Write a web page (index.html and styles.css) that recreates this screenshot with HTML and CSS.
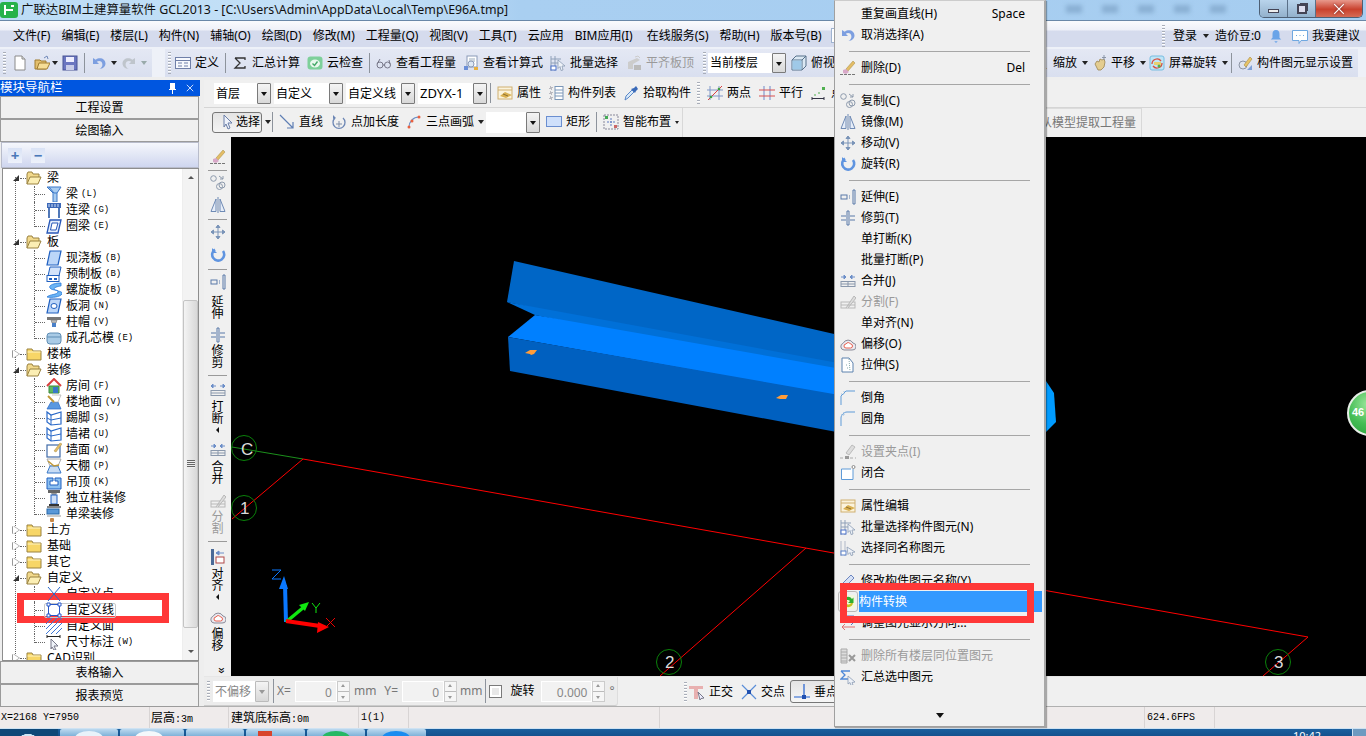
FILE: index.html
```html
<!DOCTYPE html>
<html lang="zh-CN">
<head>
<meta charset="utf-8">
<title>广联达BIM土建算量软件 GCL2013</title>
<link rel="stylesheet" href="styles.css">
</head>
<body>
<svg class="sprite" xmlns="http://www.w3.org/2000/svg">
  <symbol id="i-app" viewBox="0 0 18 16"><rect width="18" height="16" rx="3" fill="#27b24a"/><path d="M5 3v10M5 8h8M11 4h3" stroke="#fff" stroke-width="2" fill="none"/></symbol>
  <symbol id="i-new" viewBox="0 0 16 16"><path d="M3 1h7l3 3v11H3z" fill="#fff" stroke="#8a8a8a"/><path d="M10 1v3h3" fill="#ddd" stroke="#8a8a8a"/></symbol>
  <symbol id="i-open" viewBox="0 0 16 16"><path d="M1 5h5l1 1h5v8H1z" fill="#e3bf6d" stroke="#a07c30"/><path d="M3 14l2-6h11l-3 6z" fill="#f6dd96" stroke="#a07c30"/><path d="M10 3l3-2 1 3" stroke="#7088b8" fill="none"/></symbol>
  <symbol id="i-save" viewBox="0 0 16 16"><rect x="1" y="1" width="14" height="14" fill="#6b76c0" stroke="#4a5496"/><rect x="4" y="2" width="8" height="5" fill="#eef"/><rect x="4" y="10" width="8" height="5" fill="#c8cce8"/></symbol>
  <symbol id="i-undo" viewBox="0 0 16 16"><path d="M2 3v6h6L5.8 6.8C8 5.2 11.4 6.2 11.4 9.4c0 2-1 3.400-3 4.600 3.600-.2 6.100-2.400 6.100-5.400 0-4.800-5.800-7-9.800-3.800z" fill="#7d9fe0"/></symbol>
  <symbol id="i-redo" viewBox="0 0 16 16"><path d="M14 3v6H8l2.200-2.200C8 5.200 4.600 6.200 4.600 9.400c0 2 1 3.400 3 4.600-3.600-.2-6.100-2.400-6.100-5.400 0-4.800 5.800-7 9.800-3.800z" fill="#bfc5cc"/></symbol>
  <symbol id="i-define" viewBox="0 0 16 16"><rect x=".5" y="2.500" width="15" height="11" fill="#f6f8fd" stroke="#6f7fa8"/><path d="M1 5.500h14M3 8h4M3 11h4M9 8h4M9 11h4" stroke="#6f7fa8" fill="none"/></symbol>
  <symbol id="i-sigma" viewBox="0 0 16 16"><path d="M3 3h10v2M3 3l5 5-5 5h10v-2" fill="none" stroke="#333" stroke-width="1.300"/></symbol>
  <symbol id="i-check" viewBox="0 0 16 16"><rect x=".5" y="1.500" width="15" height="13" rx="3" fill="#7ed09a"/><ellipse cx="8" cy="8.500" rx="5" ry="4" fill="#eaf8ee"/><path d="M5.500 8.500l2 2 3-4" fill="none" stroke="#44a868" stroke-width="1.400"/></symbol>
  <symbol id="i-glass" viewBox="0 0 16 16"><circle cx="4" cy="10" r="3" fill="none" stroke="#778"/><circle cx="11.500" cy="10" r="3" fill="none" stroke="#778"/><path d="M7 10h2M1 9l3-5M14 9l-1-4" stroke="#778" fill="none"/></symbol>
  <symbol id="i-calc" viewBox="0 0 16 16"><rect x="4" y="1" width="10" height="11" fill="#fff" stroke="#8a9ab8"/><path d="M6 4h6M6 6h6M6 8h3" stroke="#9ab"/><circle cx="8" cy="9" r="3" fill="#dde8f6" stroke="#8a9ab8"/><rect x="1" y="11" width="4" height="4" fill="#6b8fd8"/><rect x="11" y="12" width="4" height="3" fill="#e8b040"/></symbol>
  <symbol id="i-batch" viewBox="0 0 16 16"><path d="M1 1v15M5 1v15M1 4h10M1 8h8" stroke="#8fa0b8" fill="none"/><rect x="1" y="11" width="5" height="4" fill="#fff" stroke="#4a70c8"/><path d="M8 5l7 6h-3l1 4-2 .5-1-4-2 2z" fill="#eef2f8" stroke="#8c9cb4" stroke-width=".8"/></symbol>
  <symbol id="i-flat" viewBox="0 0 16 16"><path d="M2 7l9-4 3 2-7 4v5H2z" fill="#ccc"/><path d="M8 15h7v-5H8z" fill="#bbb"/><path d="M9 2l3-1 2 2" stroke="#ccc" fill="none"/></symbol>
  <symbol id="i-cube" viewBox="0 0 16 16"><path d="M1 5l4-4h10v10l-4 4H1z" fill="#dbe8f3" stroke="#56708a"/><path d="M1 5h10v10M11 5l4-4" fill="none" stroke="#56708a"/><rect x="1.500" y="5.500" width="9" height="9" fill="#9fc9e8"/></symbol>
  <symbol id="i-zoom" viewBox="0 0 16 16"><path d="M5 3h4l2-2v5L9 8l5 6h-3L7 9l-4 5H1l4-6z" fill="#d4a860"/></symbol>
  <symbol id="i-pan" viewBox="0 0 16 16"><path d="M3 9l2-3 2 1 1-3 2 1 2-1 1 3-1 5-3 3H6z" fill="#e4cd90" stroke="#9a8450" stroke-width=".8"/><path d="M12 0v5M10 2.500h4" stroke="#8a96a8"/></symbol>
  <symbol id="i-screen" viewBox="0 0 16 16"><rect x="1" y="1" width="14" height="14" rx="2" fill="#bfe4f6" stroke="#78bde0"/><path d="M3 9a5 5 0 0 1 9-3" stroke="#d85040" fill="none" stroke-width="1.300"/><path d="M13 8a5 5 0 0 1-9 3" stroke="#d85040" fill="none" stroke-width="1.300"/><rect x="5" y="7" width="7" height="3" fill="#e8d070"/><circle cx="10" cy="11" r="1.500" fill="#50b050"/></symbol>
  <symbol id="i-show" viewBox="0 0 16 16"><circle cx="6" cy="10" r="4" fill="#dfe4ee" stroke="#8c94a4"/><path d="M7 10L13 2l2 2-6 8z" fill="#e8c468" stroke="#a88c40" stroke-width=".6"/><path d="M10 15l5-5v5z" fill="#7ea0d8"/></symbol>
  <symbol id="i-prop" viewBox="0 0 16 16"><rect x="1" y="2" width="14" height="12" fill="#fbf3dc" stroke="#d0b070"/><path d="M1 5h14" stroke="#d0b070"/><path d="M3 11l5-4 7 3-6 3z" fill="#d9b050"/><path d="M6 9l5 2" stroke="#8f7030"/></symbol>
  <symbol id="i-list" viewBox="0 0 16 16"><path d="M2 2h2v2H2zM2 7h2v2H2zM2 12h2v2H2z" fill="none" stroke="#667" stroke-width=".8" stroke-dasharray="1 1"/><rect x="7" y="1.500" width="8" height="13" fill="#fff" stroke="#7a96b8"/><path d="M7 5h8M7 8h8M7 11h8" stroke="#7a96b8"/></symbol>
  <symbol id="i-pick" viewBox="0 0 16 16"><path d="M2 15l1-4 6-6 2 2-6 6z" fill="#d8e8f8" stroke="#5a88c8"/><path d="M8 4l4 4 1-2 2-2-2-3-2 2z" fill="#3a6ab8"/></symbol>
  <symbol id="i-twop" viewBox="0 0 16 16"><path d="M3 1v14M12 1v14M0 5h16M0 11h16" stroke="#8098c8" fill="none"/><path d="M1 15L15 1" stroke="#d84040"/><circle cx="4" cy="12" r="1.300" fill="#40a040"/><circle cx="12" cy="4" r="1.300" fill="#40a040"/></symbol>
  <symbol id="i-par" viewBox="0 0 16 16"><path d="M5 1v14M11 1v14" stroke="#7088c8" fill="none"/><path d="M0 5h16M0 11h16" stroke="#d85050" fill="none"/></symbol>
  <symbol id="i-pdist" viewBox="0 0 16 16"><path d="M1 12v3M1 13.500h12M13 12v3" stroke="#334" fill="none"/><rect x="11" y="2" width="3" height="3" fill="#50b050"/><path d="M3 10h2M7 8h2" stroke="#50b050"/></symbol>
  <symbol id="i-cur" viewBox="0 0 16 16"><path d="M5 1l8 8H9l2 5-2 1-2-5-2 3z" fill="#eef2fa" stroke="#6a7ea8"/></symbol>
  <symbol id="i-line" viewBox="0 0 16 16"><path d="M1 1l13 13M14 8v6H8" fill="none" stroke="#5f7eb4" stroke-width="1.200"/></symbol>
  <symbol id="i-plen" viewBox="0 0 16 16"><path d="M4 4a6 6 0 1 0 8 0" fill="none" stroke="#6c86b4" stroke-width="1.300"/><path d="M8 7v6M5 10h6" stroke="#7f8ea8"/><path d="M2 1l3 3-3 1z" fill="#6c86b4"/></symbol>
  <symbol id="i-arc" viewBox="0 0 16 16"><path d="M3 13C3 8 7 3 13 3" fill="none" stroke="#6a90c8" stroke-width="1.200"/><circle cx="3" cy="13" r="1.500" fill="#e86040"/><circle cx="6" cy="7" r="1.500" fill="#e86040"/><circle cx="13" cy="3" r="1.500" fill="#e86040"/></symbol>
  <symbol id="i-rect" viewBox="0 0 16 16"><rect x=".5" y="2.500" width="15" height="10" fill="#cfe0fb" stroke="#6a8ed0"/></symbol>
  <symbol id="i-smart" viewBox="0 0 16 16"><rect x="1" y="1" width="14" height="14" fill="none" stroke="#889" stroke-dasharray="2 1"/><path d="M8 4v8M4 8h8" stroke="#5a78c0" stroke-dasharray="2 1"/><rect x="2" y="2" width="3" height="3" fill="#4a5"/><rect x="11" y="11" width="3" height="3" fill="#c66"/></symbol>
  <symbol id="i-ortho" viewBox="0 0 16 16"><path d="M0 2h14v3H9v10H5V5H0z" fill="#e8b0b0"/><path d="M9 8l6 6-3 .5-1 1.500z" fill="#eef" stroke="#778"/></symbol>
  <symbol id="i-cross" viewBox="0 0 16 16"><path d="M1 1l14 14M15 1L1 15" stroke="#5a8ed8" stroke-width="1.200"/><rect x="6" y="6" width="4" height="4" fill="#2050b0"/></symbol>
  <symbol id="i-perp" viewBox="0 0 16 16"><path d="M10 0v13M0 13h16" stroke="#2060d0" stroke-width="1.200"/><rect x="8" y="11" width="4" height="4" fill="#2050b0"/></symbol>
  <symbol id="i-bell" viewBox="0 0 16 16"><path d="M8 1c3 0 4 2 4 5v4l2 2H2l2-2V6c0-3 1-5 4-5z" fill="#6aa4e8"/><path d="M6 14h4l-2 2z" fill="#6aa4e8"/></symbol>
  <symbol id="i-chat" viewBox="0 0 16 16"><path d="M.5 2.500h15v10H9l-2 3v-3H.5z" fill="#fff" stroke="#70a8e0"/><path d="M4 7.500h1M7.500 7.500h1M11 7.500h1" stroke="#70a8e0"/></symbol>
  <symbol id="i-pin" viewBox="0 0 10 12"><path d="M3 1h5v6h1v1H6v4H5V8H2V7h1z" fill="#fff"/></symbol>
  <symbol id="i-close" viewBox="0 0 10 10"><path d="M1 1l8 8M9 1L1 9" stroke="#fff" fill="none"/></symbol>

  <symbol id="m-del" viewBox="0 0 16 16"><path d="M0 14.500h15" stroke="#777" stroke-dasharray="3 1"/><path d="M6 9l7-8 2 2-7 8z" fill="#e4bd66" stroke="#a08840" stroke-width=".5"/><path d="M3 10l3-1 3 3-3 2-3-1z" fill="#d8a8c8"/></symbol>
  <symbol id="m-copy" viewBox="0 0 16 16"><circle cx="3.500" cy="3.500" r="2.800" fill="none" stroke="#8d9aac"/><circle cx="9.500" cy="11.500" r="3" fill="none" stroke="#8d9aac"/><circle cx="12" cy="10" r="3" fill="none" stroke="#8d9aac"/><path d="M9 1l4 3m0-3v3h-3" stroke="#8d9aac" fill="none"/></symbol>
  <symbol id="m-mirror" viewBox="0 0 16 16"><path d="M6 2L1 14.500h5zM10 2l5 12.500h-5z" fill="#e6edf8" stroke="#6e8ab4"/><path d="M8 0v16" stroke="#6e8ab4"/></symbol>
  <symbol id="m-move" viewBox="0 0 16 16"><path d="M8 1v14M1 8h14M8 1L6 3.500h4zM8 15l-2-2.500h4zM1 8l2.500-2v4zM15 8l-2.500-2v4z" fill="#7a94b8" stroke="#7a94b8"/></symbol>
  <symbol id="m-rot" viewBox="0 0 16 16"><path d="M5 2.500A6 6 0 1 0 13 4" fill="none" stroke="#5f94e0" stroke-width="2.600"/><path d="M2 1v5h5z" fill="#5f94e0"/></symbol>
  <symbol id="m-ext" viewBox="0 0 16 16"><rect x="1" y="6" width="6" height="4" fill="none" stroke="#5878a8"/><path d="M9 7h2M9 9h2" stroke="#5878a8" stroke-dasharray="1 1"/><path d="M13 1h2v14h-2z" fill="none" stroke="#5878a8"/></symbol>
  <symbol id="m-trim" viewBox="0 0 16 16"><path d="M1 6h5M1 10h5M10 6h5M10 10h5" stroke="#5878a8" fill="none"/><path d="M7 1h2v14H7z" fill="none" stroke="#5878a8"/></symbol>
  <symbol id="m-merge" viewBox="0 0 16 16"><path d="M1 4h5M15 4h-5M6 4L4 2v4zM10 4l2-2v4z" stroke="#6c8ec8" fill="#6c8ec8"/><rect x="1" y="8.500" width="14" height="5" fill="none" stroke="#8a98ac"/><path d="M8 8v6M1 11h14" stroke="#8a98ac"/></symbol>
  <symbol id="m-break" viewBox="0 0 16 16"><path d="M6 4H1M10 4h5M1 4l2-2v4zM15 4l-2-2v4z" stroke="#6c8ec8" fill="#6c8ec8"/><rect x="1" y="8.500" width="14" height="5" fill="none" stroke="#8a98ac"/><path d="M1 11h14" stroke="#8a98ac"/></symbol>
  <symbol id="m-align" viewBox="0 0 16 16"><rect x="1" y="0" width="3" height="16" fill="#4a6a98"/><path d="M14 4H6M6 4l3-2v4z" stroke="#6c8ec8" fill="#6c8ec8"/><rect x="6" y="8" width="8" height="6" fill="#fff" stroke="#b04848"/></symbol>
  <symbol id="m-split" viewBox="0 0 16 16"><rect x="1" y="8" width="14" height="6" fill="none" stroke="#b8b8b8"/><path d="M1 11h14M6 14L14 2l2 2-8 10" stroke="#b8b8b8" fill="#ddd"/></symbol>
  <symbol id="m-off" viewBox="0 0 16 16"><path d="M4 14a3.500 3.500 0 0 1-.8-6.800A5.500 5.500 0 0 1 13 7a3.500 3.500 0 0 1-1 7z" fill="#eaeaf0" stroke="#8a8a98"/><path d="M6 12a2 2 0 0 1 0-4 2.500 2.500 0 0 1 4.500 0 2 2 0 0 1 0 4z" fill="#fff" stroke="#e86050"/></symbol>
  <symbol id="m-str" viewBox="0 0 16 16"><path d="M2 1h7l4 5v9H2z" fill="#fff" stroke="#5d82ae"/><path d="M9 2l1 12M6 8h1M7 11h1" stroke="#8aa" stroke-dasharray="1 1"/></symbol>
  <symbol id="m-chamf" viewBox="0 0 16 16"><path d="M1 15V6L6 1h9" fill="none" stroke="#5f9bd8"/><path d="M1 4h3M4 1v3" stroke="#9dc0e0" stroke-dasharray="1 1"/></symbol>
  <symbol id="m-fillet" viewBox="0 0 16 16"><path d="M1 15V7C1 4 4 1 7 1h8" fill="none" stroke="#5f9bd8"/><path d="M1 4h3M4 1v3" stroke="#9dc0e0" stroke-dasharray="1 1"/></symbol>
  <symbol id="m-grip" viewBox="0 0 16 16"><path d="M0 14h16" stroke="#aaa" stroke-dasharray="3 2"/><path d="M6 9l6-8 3 2-6 8z" fill="#ddd" stroke="#bbb"/><rect x="5" y="12" width="4" height="3" fill="#999"/></symbol>
  <symbol id="m-closed" viewBox="0 0 16 16"><path d="M13 4v10.500H1.500V4H11" fill="#fff" stroke="#5f9bd8"/><circle cx="13.500" cy="2" r="1.500" fill="#fff" stroke="#888"/></symbol>
  <symbol id="m-same" viewBox="0 0 16 16"><path d="M1 1v15M5 1v15" stroke="#b0b8c8" fill="none"/><rect x="1" y="11" width="5" height="4" fill="#fff" stroke="#5a80c8"/><path d="M7 7l8 5-3 .5 1 2.500-2 .5-1-3-2 2z" fill="#eef2f8" stroke="#8c9cb4" stroke-width=".8"/></symbol>
  <symbol id="m-name" viewBox="0 0 16 16"><path d="M1 14l2-4 8-8 3 3-8 8z" fill="#d7e1f5" stroke="#6c86c0"/><path d="M1 15h14" stroke="#9ab"/></symbol>
  <symbol id="m-conv" viewBox="0 0 16 16"><rect x="1" y="1" width="14" height="14" rx="2" fill="#f2f8dc"/><path d="M3 7a5 5 0 0 1 9-2l1.500-1.500V9H8l2-2a3 3 0 0 0-5 1z" fill="#2fae2f"/><path d="M13 9a5 5 0 0 1-9 2l-1.500 1.500V7.500H8l-2 2a3 3 0 0 0 5-.5z" fill="#c8c020"/></symbol>
  <symbol id="m-dir" viewBox="0 0 16 16"><path d="M6 1h8v5H6z" fill="none" stroke="#5878c8"/><path d="M1 7h13M11 4l3 3-3 3" fill="none" stroke="#5878c8"/><path d="M15 12H2M5 9l-3 3 3 3" fill="none" stroke="#e07070"/></symbol>
  <symbol id="m-delall" viewBox="0 0 16 16"><path d="M1 1h6v14H1z" fill="#ddd" stroke="#aaa"/><path d="M1 4h6M1 7h6M1 10h6M1 13h6" stroke="#aaa"/><path d="M9 7l6 6M15 7l-6 6" stroke="#999" stroke-width="2"/></symbol>
  <symbol id="m-sum" viewBox="0 0 16 16"><path d="M1 2h9M1 2l4 4-4 4h8" fill="none" stroke="#4e88d8" stroke-width="1.300"/><path d="M8 7l7 6-3 .5 1 2.500-2 .5-1-3-2 1.500z" fill="#eef2f8" stroke="#8c9cb4" stroke-width=".8"/></symbol>

  <symbol id="f-open" viewBox="0 0 16 14"><path d="M1 13V3l1-2h4l1 2h6v3" fill="#f2d98c" stroke="#9a8240"/><path d="M1 13l3-7h11l-3 7z" fill="#fbeeb4" stroke="#9a8240"/></symbol>
  <symbol id="f-closed" viewBox="0 0 16 14"><path d="M1 13V2h5l1 2h8v9z" fill="#f7d667" stroke="#9a8240"/><path d="M1.500 5h13" stroke="#fff4c4"/></symbol>
  <symbol id="t-beam" viewBox="0 0 16 16"><path d="M1 1h14L11 7v9H7V7z" fill="#a8ccf0" stroke="#3c78c8"/><path d="M3 1l5 6h3" stroke="#3c78c8" fill="none"/></symbol>
  <symbol id="t-lbeam" viewBox="0 0 16 16"><rect x="1" y="1" width="14" height="5" fill="#3c68b8"/><path d="M3 2v3M6 2v3M9 2v3M12 2v3" stroke="#cfe0f8"/><path d="M3 6v10M13 6v10" stroke="#5078b8" stroke-width="2"/></symbol>
  <symbol id="t-ring" viewBox="0 0 16 16"><path d="M4 2h11l-3 13H1z" fill="#e4eefc" stroke="#2858b8" stroke-width="1.300"/><path d="M6 5h6l-2 7H4.500z" fill="#fff" stroke="#2858b8"/></symbol>
  <symbol id="t-slab" viewBox="0 0 16 16"><path d="M4 1h11l-3 14H1z" fill="#bcd6f8" stroke="#2060c0" stroke-width="1.200"/></symbol>
  <symbol id="t-pre" viewBox="0 0 16 16"><path d="M4 1h11l-2 9H2z" fill="#d3e3fa" stroke="#2060c0"/><rect x="1" y="9.500" width="12" height="6" fill="#fff" stroke="#2060c0"/><path d="M3 12h3v2H3zM8 12h3v2H8z" fill="#2060c0"/></symbol>
  <symbol id="t-spiral" viewBox="0 0 16 16"><path d="M15 1C9 1 2 3 4 6s9 1 8 4-8 2-11 5c5 1 13 0 15-3s-8-3-8-5 6-3 7-3z" fill="#6bb4f4" stroke="#2878d8" stroke-width=".8"/></symbol>
  <symbol id="t-hole" viewBox="0 0 16 16"><path d="M4 1h11l-3 14H1z" fill="#bcd6f8" stroke="#2060c0" stroke-width="1.200"/><ellipse cx="8" cy="8" rx="3" ry="2.500" fill="#fff" stroke="#2060c0"/></symbol>
  <symbol id="t-cap" viewBox="0 0 16 16"><rect x="1" y="3" width="14" height="3" fill="#777"/><path d="M5 6h6l-1 3H6z" fill="#bbb" stroke="#777" stroke-width=".6"/><path d="M6 9h4v4H6z" fill="#4a80c8"/></symbol>
  <symbol id="t-core" viewBox="0 0 16 16"><rect x="1" y="3" width="14" height="11" rx="3" fill="#a9cbe6" stroke="#5f8db4"/><path d="M1 7h14" stroke="#5f8db4"/></symbol>
  <symbol id="t-room" viewBox="0 0 16 16"><path d="M1 8l7-7 7 7" fill="none" stroke="#d84040" stroke-width="2"/><path d="M3 8h10v7H3z" fill="#60b860" stroke="#3a8a3a"/><rect x="7" y="9" width="5" height="6" fill="#3878c8"/></symbol>
  <symbol id="t-floor" viewBox="0 0 16 16"><path d="M5 8L1 15h14l-3-7z" fill="#5a98e0" stroke="#2868c8" stroke-width=".7"/><path d="M6 1h9l-3 7H6" fill="#fff" stroke="#aaa" stroke-width=".7"/><path d="M2 2l6 6" stroke="#c09838" stroke-width="2"/></symbol>
  <symbol id="t-skirt" viewBox="0 0 16 16"><path d="M1 2l4 3 10-3v12l-10 1-4-3z" fill="#fff" stroke="#2868c8" stroke-width="1.200"/><path d="M5 5v10M1 8l4 2 10-2" stroke="#2868c8" fill="none"/></symbol>
  <symbol id="t-wall" viewBox="0 0 16 16"><rect x="1" y="3" width="13" height="12" fill="#fff" stroke="#3f6aa8" stroke-width="1.200"/><path d="M8 9l6-8 2 1-6 8z" fill="#e4bd66" stroke="#a88c40" stroke-width=".5"/></symbol>
  <symbol id="t-ceil" viewBox="0 0 16 16"><path d="M1 1h14l-3 7H4z" fill="#fff" stroke="#aaa"/><path d="M4 8h8l3 7H1z" fill="#c8dcf4" stroke="#3878c8"/><path d="M2 3l6 5 5-1" stroke="#c09838" stroke-width="1.500" fill="none"/></symbol>
  <symbol id="t-susp" viewBox="0 0 16 16"><path d="M1 4h6v3H4v4h8V7H9V4h6v11H1z" fill="#8cc0f0" stroke="#2060c0"/></symbol>
  <symbol id="t-col" viewBox="0 0 16 16"><rect x="2" y="0" width="12" height="3" fill="#666"/><path d="M5 3h6l-1 2H6z" fill="#999"/><rect x="5" y="5" width="6" height="9" fill="#cfe0f8" stroke="#2060c0"/><rect x="3" y="14" width="10" height="2" fill="#333"/></symbol>
  <symbol id="t-bfin" viewBox="0 0 16 16"><rect x="1" y="0" width="14" height="2" fill="#888"/><rect x="1" y="3" width="12" height="5" fill="#5a98d8" stroke="#2868a8"/><rect x="1" y="9" width="14" height="2" fill="#ccc"/><rect x="4" y="12" width="4" height="4" rx="1" fill="#c88848"/></symbol>
  <symbol id="t-point" viewBox="0 0 16 16"><path d="M2 1l12 14M14 1L2 15" stroke="#2868c8"/></symbol>
  <symbol id="t-cline" viewBox="0 0 16 16"><path d="M2.500 2.500h11v11h-11z" fill="none" stroke="#2858c8"/><path d="M1 1h3v3H1zM12 1h3v3h-3zM1 12h3v3H1zM12 12h3v3h-3z" fill="#fff" stroke="#2858c8"/></symbol>
  <symbol id="t-carea" viewBox="0 0 16 16"><path d="M0 6l6-6M0 11L11 0M0 16L16 0M5 16L16 5M10 16l6-6" stroke="#3c78d8"/></symbol>
  <symbol id="t-dim" viewBox="0 0 16 16"><path d="M1 1v3M14 1v3M1 2.500h13" stroke="#222" fill="none"/><path d="M5 5l7 7H8l2 4h-2l-2-3-1 2z" fill="#eef2f8" stroke="#778"/></symbol>
</svg>

<div class="app">
  <header class="titlebar">
    <svg class="app-logo"><use href="#i-app"/></svg>
    <span class="title-text">广联达BIM土建算量软件 GCL2013 - [C:\Users\Admin\AppData\Local\Temp\E96A.tmp]</span>
    <div class="blurred"><i></i><i></i><i></i><i></i><i></i></div>
    <div class="winctl">
      <span class="win min"><b></b></span>
      <span class="win max"><b></b></span>
      <span class="win cls"><svg><use href="#i-close"/></svg></span>
    </div>
  </header>

  <nav class="menubar">
    <span>文件(F)</span><span>编辑(E)</span><span>楼层(L)</span><span>构件(N)</span><span>辅轴(O)</span><span>绘图(D)</span><span>修改(M)</span><span>工程量(Q)</span><span>视图(V)</span><span>工具(T)</span><span>云应用</span><span>BIM应用(I)</span><span class="ml3">在线服务(S)</span><span>帮助(H)</span><span>版本号(B)</span>
    <span class="searchbox"></span>
    <div class="menu-right">
      <i class="grip"></i>
      <span class="mlogin">登录</span><i class="caret"></i><span>造价豆:0</span>
      <svg class="ic bell"><use href="#i-bell"/></svg>
      <span class="tool"><svg class="ic"><use href="#i-chat"/></svg>我要建议</span>
    </div>
  </nav>

  <div class="maintools">
    <div class="tgroup g-file">
      <i class="grip"></i>
      <svg class="ic ml6"><use href="#i-new"/></svg>
      <svg class="ic ml6"><use href="#i-open"/></svg><i class="caret ml2"></i>
      <svg class="ic ml4"><use href="#i-save"/></svg>
      <i class="sep ml6"></i>
      <svg class="ic ml6"><use href="#i-undo"/></svg><i class="caret ml4"></i>
      <svg class="ic ml4"><use href="#i-redo"/></svg><i class="caret ml4 off"></i>
    </div>
    <div class="tgroup g-main">
      <i class="grip"></i>
      <span class="tool ml4"><svg class="ic"><use href="#i-define"/></svg>定义</span>
      <i class="sep ml6"></i>
      <span class="tool ml6"><svg class="ic"><use href="#i-sigma"/></svg>汇总计算</span>
      <span class="tool ml7"><svg class="ic"><use href="#i-check"/></svg>云检查</span>
      <i class="sep ml6"></i>
      <span class="tool ml6"><svg class="ic"><use href="#i-glass"/></svg>查看工程量</span>
      <span class="tool ml7"><svg class="ic"><use href="#i-calc"/></svg>查看计算式</span>
      <span class="tool ml7"><svg class="ic"><use href="#i-batch"/></svg>批量选择</span>
      <span class="tool ml8 dis"><svg class="ic"><use href="#i-flat"/></svg>平齐板顶</span>
    </div>
    <div class="tgroup g-view">
      <i class="grip"></i>
      <span class="sel w64 ml2">当前楼层</span><i class="dd"></i>
      <span class="tool ml5"><svg class="ic"><use href="#i-cube"/></svg>俯视</span>
      <span class="under-menu"></span>
      <span class="tool"><svg class="ic"><use href="#i-zoom"/></svg>缩放</span><i class="caret ml5"></i>
      <span class="tool ml4 t3"><svg class="ic"><use href="#i-pan"/></svg>平移</span><i class="caret ml5"></i>
      <span class="tool ml3"><svg class="ic"><use href="#i-screen"/></svg>屏幕旋转</span><i class="caret ml5"></i>
      <i class="sep ml3"></i>
      <span class="tool ml5"><svg class="ic"><use href="#i-show"/></svg>构件图元显示设置</span>
    </div>
  </div>

  <div class="main">
    <aside class="nav">
      <div class="nav-head"><span>模块导航栏</span><svg class="pin"><use href="#i-pin"/></svg><svg class="x"><use href="#i-close"/></svg></div>
      <button class="nav-btn">工程设置</button>
      <button class="nav-btn">绘图输入</button>
      <div class="tree-tools"><span class="pm">+</span><span class="pm">−</span></div>
      <div class="tree-wrap">
        <ul class="tree">
          <li class="p open"><svg class="fold"><use href="#f-open"/></svg>梁</li>
          <li class="c"><svg class="ic"><use href="#t-beam"/></svg>梁<em>(L)</em></li>
          <li class="c"><svg class="ic"><use href="#t-lbeam"/></svg>连梁<em>(G)</em></li>
          <li class="c last"><svg class="ic"><use href="#t-ring"/></svg>圈梁<em>(E)</em></li>
          <li class="p open"><svg class="fold"><use href="#f-open"/></svg>板</li>
          <li class="c"><svg class="ic"><use href="#t-slab"/></svg>现浇板<em>(B)</em></li>
          <li class="c"><svg class="ic"><use href="#t-pre"/></svg>预制板<em>(B)</em></li>
          <li class="c"><svg class="ic"><use href="#t-spiral"/></svg>螺旋板<em>(B)</em></li>
          <li class="c"><svg class="ic"><use href="#t-hole"/></svg>板洞<em>(N)</em></li>
          <li class="c"><svg class="ic"><use href="#t-cap"/></svg>柱帽<em>(V)</em></li>
          <li class="c last"><svg class="ic"><use href="#t-core"/></svg>成孔芯模<em>(E)</em></li>
          <li class="p"><svg class="fold"><use href="#f-closed"/></svg>楼梯</li>
          <li class="p open"><svg class="fold"><use href="#f-open"/></svg>装修</li>
          <li class="c"><svg class="ic"><use href="#t-room"/></svg>房间<em>(F)</em></li>
          <li class="c"><svg class="ic"><use href="#t-floor"/></svg>楼地面<em>(V)</em></li>
          <li class="c"><svg class="ic"><use href="#t-skirt"/></svg>踢脚<em>(S)</em></li>
          <li class="c"><svg class="ic"><use href="#t-skirt"/></svg>墙裙<em>(U)</em></li>
          <li class="c"><svg class="ic"><use href="#t-wall"/></svg>墙面<em>(W)</em></li>
          <li class="c"><svg class="ic"><use href="#t-ceil"/></svg>天棚<em>(P)</em></li>
          <li class="c"><svg class="ic"><use href="#t-susp"/></svg>吊顶<em>(K)</em></li>
          <li class="c"><svg class="ic"><use href="#t-col"/></svg>独立柱装修</li>
          <li class="c last"><svg class="ic"><use href="#t-bfin"/></svg>单梁装修</li>
          <li class="p"><svg class="fold"><use href="#f-closed"/></svg>土方</li>
          <li class="p"><svg class="fold"><use href="#f-closed"/></svg>基础</li>
          <li class="p"><svg class="fold"><use href="#f-closed"/></svg>其它</li>
          <li class="p open"><svg class="fold"><use href="#f-open"/></svg>自定义</li>
          <li class="c"><svg class="ic"><use href="#t-point"/></svg>自定义点</li>
          <li class="c"><span class="frame"><svg class="ic"><use href="#t-cline"/></svg>自定义线</span></li>
          <li class="c"><svg class="ic"><use href="#t-carea"/></svg>自定义面</li>
          <li class="c last"><svg class="ic"><use href="#t-dim"/></svg>尺寸标注<em>(W)</em></li>
          <li class="p"><svg class="fold"><use href="#f-closed"/></svg>CAD识别</li>
        </ul>
        <div class="vscroll">
          <span class="sb-up"></span>
          <span class="sb-track"><span class="sb-thumb"><i></i></span></span>
          <span class="sb-down"></span>
        </div>
      </div>
      <button class="nav-btn">表格输入</button>
      <button class="nav-btn">报表预览</button>
      <span class="redbox redbox-tree"></span>
    </aside>

    <section class="work">
      <div class="rowa">
        <span class="sel w44">首层</span><i class="dd"></i>
        <span class="sel w55 ml3">自定义</span><i class="dd"></i>
        <span class="sel w55 ml3">自定义线</span><i class="dd"></i>
        <span class="sel w55 ml3 latin">ZDYX-1</span><i class="dd"></i>
        <i class="sep ml3"></i>
        <span class="tool ml6"><svg class="ic"><use href="#i-prop"/></svg>属性</span>
        <span class="tool ml7"><svg class="ic"><use href="#i-list"/></svg>构件列表</span>
        <span class="tool ml7"><svg class="ic"><use href="#i-pick"/></svg>拾取构件</span>
        <i class="grip ml6"></i>
        <span class="tool ml7"><svg class="ic"><use href="#i-twop"/></svg>两点</span>
        <span class="tool ml8"><svg class="ic"><use href="#i-par"/></svg>平行</span>
        <span class="tool ml8"><svg class="ic"><use href="#i-pdist"/></svg>点角</span>
      </div>
      <div class="rowb">
        <span class="tgl-select tool"><svg class="ic"><use href="#i-cur"/></svg>选择</span><i class="caret ml3"></i>
        <i class="sep ml1"></i>
        <span class="tool ml6"><svg class="ic"><use href="#i-line"/></svg>直线</span>
        <span class="tool ml8"><svg class="ic"><use href="#i-plen"/></svg>点加长度</span>
        <span class="tool ml7"><svg class="ic"><use href="#i-arc"/></svg>三点画弧</span><i class="caret ml4"></i>
        <span class="sel w40 ml2"></span><i class="dd"></i>
        <span class="tool ml6"><svg class="ic"><use href="#i-rect"/></svg>矩形</span>
        <i class="sep ml6"></i>
        <span class="tool ml6"><svg class="ic"><use href="#i-smart"/></svg>智能布置</span><i class="caret small ml4"></i>
        <span class="rowb-end"></span>
        <span class="ghost">从模型提取工程量</span>
      </div>
      <div class="stage">
        <div class="vbar">
          <svg class="ic mt12"><use href="#m-del"/></svg>
          <i class="hsep mt5"></i>
          <svg class="ic mt4"><use href="#m-copy"/></svg>
          <svg class="ic mt6"><use href="#m-mirror"/></svg>
          <i class="hsep mt6"></i>
          <svg class="ic mt4"><use href="#m-move"/></svg>
          <svg class="ic mt7"><use href="#m-rot"/></svg>
          <i class="hsep mt6"></i>
          <svg class="ic mt4"><use href="#m-ext"/></svg>
          <span class="vtext mt6">延伸</span>
          <svg class="ic mt7"><use href="#m-trim"/></svg>
          <span class="vtext mt2">修剪</span>
          <i class="hsep mt6"></i>
          <svg class="ic mt6"><use href="#m-break"/></svg>
          <span class="vtext mt3">打断</span>
          <i class="left-tri mt2"></i>
          <svg class="ic mt9"><use href="#m-merge"/></svg>
          <span class="vtext mt3">合并</span>
          <svg class="ic mt8"><use href="#m-split"/></svg>
          <span class="vtext mt2 dis">分割</span>
          <i class="hsep mt6"></i>
          <svg class="ic mt7"><use href="#m-align"/></svg>
          <span class="vtext mt3">对齐</span>
          <i class="left-tri mt2"></i>
          <svg class="ic mt9"><use href="#m-off"/></svg>
          <span class="vtext mt3">偏移</span>
          <span class="chev mt13">»</span>
        </div>
        <div class="canvas">
          <svg class="scene" viewBox="231 137 1135 539" xmlns="http://www.w3.org/2000/svg">
            <defs>
              <radialGradient id="ball" cx="45%" cy="30%" r="75%"><stop offset="0" stop-color="#9be69b"/><stop offset=".6" stop-color="#45bd55"/><stop offset="1" stop-color="#2ea640"/></radialGradient>
            </defs>
            <polygon points="514,261 1040,381 1040,420 507,302" fill="#0066c6"/>
            <polygon points="507,302 1040,400 1040,420 535,315" fill="#0070d8"/>
            <polygon points="508,337 535,315 1040,404 1040,432" fill="#0080ff"/>
            <polygon points="508,337 1040,430 1040,470 510,371" fill="#0060c0"/>
            <polygon points="1040,378 1046,381 1054,393 1056,422 1046,432 1040,432" fill="#009bff"/>
            <path d="M525 353l5-3h7l-3 4-3 1-1-1z" fill="#ff9d3a"/>
            <path d="M776 398l5-3h7l-2 4h-6z" fill="#ff9d3a"/>
            <g fill="none" stroke-width="1">
              <path d="M232 447L303 459" stroke="#1c8f1c"/>
              <path d="M303 459L1308 637L1263 676M303 459L232 519M806 548L660 676" stroke="#f00"/>
              <circle cx="244" cy="448" r="12.500" stroke="#0b800b"/>
              <circle cx="244" cy="508" r="12.500" stroke="#0b800b"/>
              <circle cx="669" cy="662" r="12.500" stroke="#0b800b"/>
              <circle cx="1278" cy="662" r="12.500" stroke="#0b800b"/>
            </g>
            <g class="axis-label">
              <text x="241" y="455">C</text>
              <text x="240" y="514">1</text>
              <text x="665" y="668">2</text>
              <text x="1274" y="668">3</text>
            </g>
            <g>
              <path d="M286 622L285 585" stroke="#0a78ff" stroke-width="4"/>
              <path d="M284 576l-5 13h9z" fill="#0a78ff"/>
              <path d="M286 622L304 607" stroke="#10e810" stroke-width="3.500"/>
              <path d="M309 602l-10 3 6 6z" fill="#10e810"/>
              <path d="M286 621L320 626" stroke="#f00" stroke-width="4"/>
              <path d="M329 627l-11-5-1 11z" fill="#f00"/>
              <path d="M272 570h9l-9 9h9" stroke="#0a78ff" fill="none"/>
              <path d="M312 603l4 5 4-5M316 608v5" stroke="#10e810" fill="none"/>
              <path d="M326 618l9 9M335 618l-9 9" stroke="#e00" fill="none"/>
            </g>
            <circle cx="1370" cy="413" r="22" fill="url(#ball)" stroke="#e8efe8" stroke-width="2"/>
            <text class="ball-num" x="1352" y="416">46</text>
          </svg>
        </div>
      </div>
      <div class="rowc">
        <div class="offset-group">
          <i class="grip"></i>
          <span class="sel w42 ml3 dim">不偏移</span><i class="dd off"></i>
          <i class="sep ml4"></i>
          <span class="lbl ml3">X=</span>
          <span class="num w42 ml4">0</span><i class="spin"></i>
          <span class="lbl ml4">mm</span>
          <span class="lbl ml8">Y=</span>
          <span class="num w42 ml4">0</span><i class="spin"></i>
          <span class="lbl ml3">mm</span>
          <i class="sep ml3"></i>
          <i class="chk ml3"></i>
          <span class="ml8">旋转</span>
          <span class="num w51 ml7">0.000</span><i class="spin"></i>
          <span class="lbl ml4">°</span>
        </div>
        <div class="snap-group">
          <i class="grip"></i>
          <span class="tool ml2"><svg class="ic"><use href="#i-ortho"/></svg>正交</span>
          <span class="tool ml8"><svg class="ic"><use href="#i-cross"/></svg>交点</span>
          <span class="tool tgl-snap ml5"><svg class="ic"><use href="#i-perp"/></svg>垂点</span>
        </div>
      </div>
    </section>
  </div>

  <footer class="status">
    <span class="cell c1 mono">X=2168 Y=7950</span>
    <span class="cell c2">层高<b class="mono">:3m</b></span>
    <span class="cell c3">建筑底标高<b class="mono">:0m</b></span>
    <span class="cell c4 mono">1(1)</span>
    <span class="cell c5"></span>
    <span class="cell c6"></span>
    <span class="cell c7 mono">624.6FPS</span>
    <span class="cell c8"></span>
  </footer>
  <div class="taskbar">
    <span class="orb"></span>
    <span class="task tk-white"></span><span class="task t2 tk-pale"></span><span class="task tk-none"></span><span class="task w59 tk-red"></span><span class="task tk-green"></span><span class="task w59 tk-blue"></span>
    <span class="clock">10:42</span>
    <span class="showdesk"></span>
  </div>
</div>

<div class="ctx">
  <div class="mi"><span class="mic"></span><span class="mt">重复画直线(H)</span><span class="sc">Space</span></div>
  <div class="mi"><svg class="ic mic"><use href="#i-undo"/></svg><span class="mt">取消选择(A)</span></div>
  <hr>
  <div class="mi"><svg class="ic mic"><use href="#m-del"/></svg><span class="mt">删除(D)</span><span class="sc">Del</span></div>
  <hr>
  <div class="mi"><svg class="ic mic"><use href="#m-copy"/></svg><span class="mt">复制(C)</span></div>
  <div class="mi"><svg class="ic mic"><use href="#m-mirror"/></svg><span class="mt">镜像(M)</span></div>
  <div class="mi"><svg class="ic mic"><use href="#m-move"/></svg><span class="mt">移动(V)</span></div>
  <div class="mi"><svg class="ic mic"><use href="#m-rot"/></svg><span class="mt">旋转(R)</span></div>
  <hr>
  <div class="mi"><svg class="ic mic"><use href="#m-ext"/></svg><span class="mt">延伸(E)</span></div>
  <div class="mi"><svg class="ic mic"><use href="#m-trim"/></svg><span class="mt">修剪(T)</span></div>
  <div class="mi"><span class="mic"></span><span class="mt">单打断(K)</span></div>
  <div class="mi"><span class="mic"></span><span class="mt">批量打断(P)</span></div>
  <div class="mi"><svg class="ic mic"><use href="#m-merge"/></svg><span class="mt">合并(J)</span></div>
  <div class="mi dis"><svg class="ic mic"><use href="#m-split"/></svg><span class="mt">分割(F)</span></div>
  <div class="mi"><span class="mic"></span><span class="mt">单对齐(N)</span></div>
  <div class="mi"><svg class="ic mic"><use href="#m-off"/></svg><span class="mt">偏移(O)</span></div>
  <div class="mi"><svg class="ic mic"><use href="#m-str"/></svg><span class="mt">拉伸(S)</span></div>
  <hr>
  <div class="mi"><svg class="ic mic"><use href="#m-chamf"/></svg><span class="mt">倒角</span></div>
  <div class="mi"><svg class="ic mic"><use href="#m-fillet"/></svg><span class="mt">圆角</span></div>
  <hr>
  <div class="mi dis"><svg class="ic mic"><use href="#m-grip"/></svg><span class="mt">设置夹点(I)</span></div>
  <div class="mi"><svg class="ic mic"><use href="#m-closed"/></svg><span class="mt">闭合</span></div>
  <hr>
  <div class="mi"><svg class="ic mic"><use href="#i-prop"/></svg><span class="mt">属性编辑</span></div>
  <div class="mi"><svg class="ic mic"><use href="#i-batch"/></svg><span class="mt">批量选择构件图元(N)</span></div>
  <div class="mi"><svg class="ic mic"><use href="#m-same"/></svg><span class="mt">选择同名称图元</span></div>
  <hr>
  <div class="mi"><svg class="ic mic"><use href="#m-name"/></svg><span class="mt">修改构件图元名称(Y)</span></div>
  <div class="mi hot"><span class="micbox"><svg class="ic"><use href="#m-conv"/></svg></span><span class="mt">构件转换</span></div>
  <div class="mi"><svg class="ic mic"><use href="#m-dir"/></svg><span class="mt">调整图元显示方向...</span></div>
  <hr>
  <div class="mi dis"><svg class="ic mic"><use href="#m-delall"/></svg><span class="mt">删除所有楼层同位置图元</span></div>
  <div class="mi"><svg class="ic mic"><use href="#m-sum"/></svg><span class="mt">汇总选中图元</span></div>
  <div class="more"></div>
</div>
<span class="redbox redbox-menu"></span>
</body>
</html>
```
FILE: styles.css
```css
* { box-sizing: border-box; }
html, body { margin: 0; height: 100%; overflow: hidden; }
body {
  position: relative;
  width: 1366px;
  height: 736px;
  font: 12px/16px "Noto Sans", "Noto Sans CJK SC", sans-serif;
  color: #000;
  background: #f0f0f0;
}
i, em, b { font-style: normal; font-weight: normal; }
.sprite { position: absolute; width: 0; height: 0; }
.app { display: flex; flex-direction: column; width: 1366px; height: 736px; }

.ic { display: block; flex: none; width: 16px; height: 16px; }
.tool { display: flex; flex: none; align-items: center; gap: 4px; white-space: nowrap; }
.t3 { gap: 3px; }
.dis { color: #9a9a9a; }
.ml1 { margin-left: 1px; } .ml2 { margin-left: 2px; } .ml3 { margin-left: 3px; } .ml4 { margin-left: 4px; } .ml5 { margin-left: 5px; }
.ml6 { margin-left: 6px; } .ml7 { margin-left: 7px; } .ml8 { margin-left: 8px; }
.mt2 { margin-top: 2px; } .mt3 { margin-top: 3px; } .mt4 { margin-top: 4px; } .mt5 { margin-top: 5px; }
.mt6 { margin-top: 6px; } .mt7 { margin-top: 7px; } .mt8 { margin-top: 8px; } .mt9 { margin-top: 9px; }
.mt12 { margin-top: 12px; } .mt13 { margin-top: 13px; }

.grip {
  flex: none; width: 3px; height: 22px;
  background: repeating-linear-gradient(#a9aeb9 0 1px, #fff 1px 2px, transparent 2px 3px);
}
.sep { flex: none; width: 1px; height: 20px; background: #8d939c; }
.caret { flex: none; width: 0; height: 0; border: 3px solid transparent; border-top: 4px solid #222; border-bottom: 0; }
.caret.off { border-top-color: #9aa; }
.caret.small { border-width: 2.500px; border-top-width: 3px; border-bottom: 0; }

.sel {
  display: block; flex: none; height: 21px; padding-left: 2px; line-height: 21px;
  background: #fff; white-space: nowrap; overflow: hidden;
}
.w40 { width: 40px; } .w42 { width: 42px; } .w44 { width: 43px; } .w51 { width: 51px; }
.w55 { width: 55px; } .w64 { width: 64px; }
.dim { color: #888; }
.latin { font-size: 13px; }
.dd {
  position: relative; flex: none; width: 14px; height: 21px;
  border: 1px solid #7a7a7a; border-radius: 1px;
  background: linear-gradient(#f4f4f4, #d8d8d8);
}
.dd::after {
  content: ""; position: absolute; left: 3px; top: 8px;
  border: 3px solid transparent; border-top: 4px solid #111; border-bottom: 0;
}
.dd.off { border-color: #bbb; }
.dd.off::after { border-top-color: #999; }

/* title */
.titlebar {
  display: flex; align-items: center; flex: none; height: 21px; position: relative;
  background: linear-gradient(90deg, #bcdcf6 0, #c5e1f7 380px, #a9cff1 520px, #a6cdf0 100%);
  border-bottom: 1px solid #6a88a8;
  color: #111;
}
.app-logo { width: 18px; height: 16px; flex: none; }
.title-text { margin-left: 3px; white-space: nowrap; font-size: 12.400px; }
.blurred { position: absolute; left: 1066px; top: 5px; display: flex; gap: 20px; filter: blur(2px); }
.blurred i { display: block; width: 16px; height: 8px; background: #8ab0d4; }
.winctl { position: absolute; right: 3px; top: 0; display: flex; height: 18px; border: 1px solid #4d5f74; border-top: 0; border-radius: 0 0 5px 5px; overflow: hidden; }
.win { display: flex; align-items: center; justify-content: center; width: 28px; background: linear-gradient(#b9d4ec, #93b1cc); border-right: 1px solid #5a7088; }
.win b { display: block; }
.min b { width: 11px; height: 4px; border: 1px solid #445; background: #eee; margin-top: 5px; }
.max b { width: 10px; height: 10px; border: 2px solid #445; background: #dde; box-shadow: 2px -2px 0 -1px #445; }
.cls { width: 46px; background: linear-gradient(#e8998c, #c9412d 55%, #d66b55); border-right: 0; }
.cls svg { width: 12px; height: 12px; filter: drop-shadow(0 0 1px #622); }

/* menu */
.menubar {
  display: flex; align-items: center; gap: 11px; flex: none; height: 26px; padding: 3px 0 0 13px;
  background: linear-gradient(#fafbfd 0, #eef0f8 9px, #d5dbed 10px, #d5dbed 100%);
  white-space: nowrap;
}
.searchbox { flex: none; width: 30px; height: 15px; margin-left: -2px; background: #fff; border: 1px solid #9fb3d0; }
.menu-right { display: flex; align-items: center; gap: 6px; margin-left: auto; padding-right: 6px; }
.menu-right .grip { margin-right: 2px; height: 22px; }
.bell { margin-left: 2px; width: 14px; }
.menu-right .tool { margin-left: 3px; }

/* main toolbar */
.maintools {
  display: flex; flex: none; height: 30px; padding-top: 2px;
  background: #eef1f8;
}
.tgroup { display: flex; align-items: center; flex: none; height: 28px; padding-left: 3px; background: linear-gradient(#e4e8f4, #d9dfef); }
.g-file { width: 152px; }
.g-main { width: 535px; margin-left: 13px; }
.g-view { width: 658px; padding-right: 0; }
.under-menu { flex: none; width: 198px; }
.g-view .sel { height: 20px; line-height: 20px; }
.g-view .dd { height: 20px; }

/* main row */
.main { position: relative; display: flex; flex: none; height: 629px; padding-top: 3px; background: #eeeeee; }
.nav { display: flex; flex-direction: column; flex: none; width: 200px; }
.nav-head {
  display: flex; align-items: center; flex: none; height: 16px;
  color: #fff; background: #0056e0; font-size: 12.500px;
}
.nav-head span { flex: 1; }
.nav-head .pin { width: 10px; height: 12px; margin-right: 9px; }
.nav-head .x { width: 8px; height: 8px; margin-right: 6px; }
.nav-btn {
  display: block; flex: none; width: 199px; height: 23px; padding: 0;
  font: inherit; color: #000; text-align: center;
  background: #f0f0f0; border: 1px solid #9b9b9b; border-radius: 0;
}
.tree-tools {
  display: flex; gap: 9px; flex: none; width: 198px; height: 26px; padding: 5px 0 0 6px; margin-left: 1px;
  background: linear-gradient(#f5f7fc, #cfd6ef);
  border: 1px solid #b8bccb;
}
.pm {
  display: block; width: 14px; height: 15px; line-height: 14px; text-align: center;
  font-size: 15px; font-weight: 700; color: #4a78b8;
  background: linear-gradient(#d9e2f5, #eef2fb);
}
.tree-wrap {
  display: flex; flex: none; width: 197px; height: 493px; margin-left: 2px;
  background: #fff; border: 1px solid #8d8d8d; overflow: hidden;
}
.tree {
  position: relative; flex: 1; margin: 0; padding: 1px 0 0; list-style: none; overflow: hidden;
  font-size: 12px; line-height: 16px;
}
.tree::before {
  content: ""; position: absolute; left: 12px; top: 8px; bottom: 0;
  border-left: 1px dotted #666;
}
.tree li { position: relative; display: flex; align-items: center; height: 16px; white-space: nowrap; }
.p { padding-left: 23px; }
.p::before {
  content: ""; position: absolute; left: 10px; top: 4px; z-index: 1; width: 0; height: 0;
  border-style: solid; border-width: 4px 0 4px 6px; border-color: transparent transparent transparent #fff;
  filter: drop-shadow(-1px 0 0 #999) drop-shadow(1px 0 0 #999);
}
.p.open::before { border-width: 0 0 6px 6px; border-color: transparent transparent #333; top: 5px; filter: none; }
.p::after { content: ""; position: absolute; left: 17px; top: 8px; width: 6px; border-top: 1px dotted #666; }
.fold { flex: none; width: 16px; height: 14px; margin-right: 5px; }
.c { padding-left: 43px; }
.c .ic { margin-right: 4px; position: relative; z-index: 1; }
.c::before { content: ""; position: absolute; left: 31px; top: 0; height: 100%; border-left: 1px dotted #666; }
.c.last::before { height: 9px; }
.c::after { content: ""; position: absolute; left: 32px; top: 8px; width: 10px; border-top: 1px dotted #666; }
.tree em { margin-left: 3px; font: 9px/16px "Liberation Mono", monospace; }
.frame { position: relative; z-index: 1; display: flex; align-items: center; height: 15px; margin-left: -2px; padding: 0 1px 0 1px; border: 1px solid #c8c8c8; border-radius: 2px; }
.vscroll { display: flex; flex-direction: column; flex: none; width: 16px; background: #f3f3f3; border-left: 1px solid #eee; }
.sb-up, .sb-down { position: relative; flex: none; height: 17px; }
.sb-up::after, .sb-down::after { content: ""; position: absolute; left: 5px; top: 7px; border: 3px solid transparent; border-bottom: 3px solid #555; border-top: 0; }
.sb-down::after { border-bottom: 0; border-top: 3px solid #555; }
.sb-track { display: block; flex: 1; position: relative; padding-top: 114px; }
.sb-thumb { display: flex; align-items: center; justify-content: center; height: 328px; background: linear-gradient(90deg, #f4f4f4, #d8d8d8); border: 1px solid #c4c4c4; border-radius: 2px; }
.sb-thumb i { display: block; width: 8px; height: 8px; background: repeating-linear-gradient(#666 0 1px, #eee 1px 2px); }

/* work */
.work { display: flex; flex-direction: column; flex: none; width: 1162px; margin-left: 4px; }
.rowa { display: flex; align-items: center; flex: none; height: 28px; padding: 0 0 1px 10px; background: #f0f0f0; border-bottom: 1px solid #d5d5d5; }
.rowb { display: flex; align-items: center; flex: none; height: 29px; padding: 0 0 1px 8px; background: #f0f0f0; }
.tgl-select { width: 50px; height: 21px; padding-left: 6px; gap: 1px; border: 1px solid #777; border-radius: 3px; background: linear-gradient(#e4e4e4, #f4f4f4); }
.rowb-end { flex: none; width: 1px; height: 29px; margin-left: 3px; background: #d8d8d8; }
.ghost { display: block; height: 29px; margin-left: auto; margin-right: 224px; padding: 6px 5px 0 4px; color: #777; border-right: 1px solid #d8d8d8; border-top: 1px solid #dcdcdc; }

.stage { display: flex; flex: none; height: 539px; }
.vbar { display: flex; flex-direction: column; align-items: center; flex: none; width: 27px; background: #f0f0f0; }
.hsep { flex: none; display: block; width: 19px; height: 1px; background: #9a9a9a; }
.vtext { display: block; width: 12px; line-height: 12px; word-break: break-all; flex: none; }
.left-tri { flex: none; width: 0; height: 0; border: 3px solid transparent; border-right: 3px solid #111; border-left: 0; }
.chev { display: block; height: 12px; margin-left: 9px; line-height: 10px; font-size: 13px; transform: rotate(90deg); }
.canvas { position: relative; flex: 1; background: #000; overflow: hidden; }
.scene { position: absolute; inset: 0; width: 100%; height: 100%; }
.axis-label text { fill: #dcdcdc; font: 17px "Liberation Sans", sans-serif; }
.ball-num { fill: #fff; font: 700 11px "Liberation Sans", sans-serif; }

.rowc { display: flex; justify-content: space-between; flex: none; height: 30px; background: #f0f0f0; border-top: 1px solid #e6e6e6; }
.offset-group { display: flex; align-items: center; flex: none; width: 414px; padding: 0 0 0 3px; background: #ececec; border-right: 1px solid #ddd; border-bottom: 1px solid #ccc; border-radius: 0 0 3px 0; white-space: nowrap; }
.offset-group > * { flex: none; }
.offset-group .sel { height: 21px; }
.offset-group .sep { height: 24px; }
.offset-group .grip, .snap-group .grip { height: 20px; }
.lbl { color: #777; font-family: "Noto Sans", sans-serif; }
.num { display: block; flex: none; height: 21px; padding-right: 4px; line-height: 21px; text-align: right; color: #888; background: #f2f2f2; border: 1px solid #fff; }
.spin { position: relative; flex: none; width: 13px; height: 21px; border: 1px solid #ccc; background: linear-gradient(#f6f6f6, #f6f6f6 48%, #bbb 48%, #bbb 52%, #f6f6f6 52%); }
.spin::before, .spin::after { content: ""; position: absolute; left: 3px; border: 2.500px solid transparent; }
.spin::before { top: 2px; border-bottom: 3px solid #999; border-top: 0; }
.spin::after { bottom: 2px; border-top: 3px solid #999; border-bottom: 0; }
.chk { flex: none; width: 13px; height: 13px; background: #e8e8e8; border: 1px solid #7a7a7a; box-shadow: inset 0 0 0 2px #fff; }
.snap-group { display: flex; align-items: center; flex: none; width: 684px; padding-left: 2px; }
.tgl-snap { width: 100px; height: 23px; padding-left: 3px; border: 1px solid #777; border-radius: 3px; background: linear-gradient(#e4e4e4, #f6f6f6); }

/* status */
.status { display: flex; flex: none; height: 22px; background: #efebeb; border-top: 1px solid #b0b0b0; line-height: 21px; white-space: nowrap; }
.cell { display: block; flex: none; padding-left: 1px; border-right: 1px solid #d8d4d4; overflow: hidden; }
.mono, b.mono { font-family: "Liberation Mono", monospace; font-size: 10px; }
.c1 { width: 150px; } .c2 { width: 79px; } .c3 { width: 130px; padding-left: 2px; } .c4 { width: 50px; padding-left: 2px; }
.c5 { width: 251px; } .c6 { width: 485px; } .c7 { width: 70px; padding-left: 2px; } .c8 { flex: 1; border-right: 0; }

.taskbar { position: relative; display: flex; gap: 2px; flex: none; height: 8px; background: linear-gradient(#1a5f9e, #15528e); border-top: 1px solid #cfe2f2; overflow: hidden; }
.orb { flex: none; width: 58px; background: radial-gradient(ellipse 14px 8px at 28px 10px, #cfe6f6 0 60%, transparent 65%), #0f4878; }
.task { position: relative; flex: none; width: 58px; background: linear-gradient(#bcd9ef, #7fb2d9); border-radius: 2px 2px 0 0; overflow: hidden; }
.t2 { width: 64px; }
.w59 { width: 59px; }
.task::after { content: ""; position: absolute; left: 15px; top: 2px; width: 28px; height: 14px; border-radius: 50%; }
.tk-none::after { display: none; }
.tk-white::after { background: #e8f2fa; }
.tk-pale::after { background: #f4f8fb; }
.tk-red::after { left: 12px; width: 14px; border-radius: 0; background: #d8442c; }
.tk-green::after { background: #26b864; }
.tk-blue::after { background: #1a8cf0; }
.clock { position: absolute; left: 1293px; top: 0; color: #fff; font-size: 11px; line-height: 14px; }
.showdesk { position: absolute; right: 0; top: 0; width: 14px; height: 8px; background: #6e9ac0; border-left: 1px solid #cfe2f2; }

/* context menu */
.ctx {
  position: absolute; left: 834px; top: 0; width: 212px; height: 727px; padding-top: 2px;
  background: #f0f0f0; border: 1px solid #a0a0a0; border-right: 2px solid #a8a8a8; border-top-color: #ccc;
  box-shadow: 1px 1px 1px rgba(0,0,0,.3);
}
.mi { display: flex; align-items: center; height: 21px; padding-left: 5px; white-space: nowrap; }
.mic { flex: none; width: 16px; height: 16px; }
.mt { margin-left: 5px; padding-left: 0; flex: 1; }
.sc { margin-right: 19px; }
.ctx hr { height: 1px; margin: 5.500px 14px 5.500px 14px; border: 0; background: #a6a6a6; }
.hot { position: relative; padding-left: 24px; margin-right: 2px; color: #fff; background: linear-gradient(90deg, transparent 0, transparent 24px, #3399ff 24px); }
.hot .mt { margin-left: 0; }
.micbox { position: absolute; left: 3px; top: 0; display: flex; align-items: center; justify-content: center; width: 20px; height: 21px; border: 1px solid #b8b8b8; border-radius: 3px; }
.more { margin-top: 26px; width: 0; height: 0; margin-left: 101px; border: 4px solid transparent; border-top: 5px solid #111; border-bottom: 0; }

.redbox { position: absolute; border: 7px solid #ff3838; }
.redbox-tree { left: 17px; top: 516px; width: 152px; height: 30px; }
.redbox-menu { left: 840px; top: 583px; width: 194px; height: 40px; }
```
